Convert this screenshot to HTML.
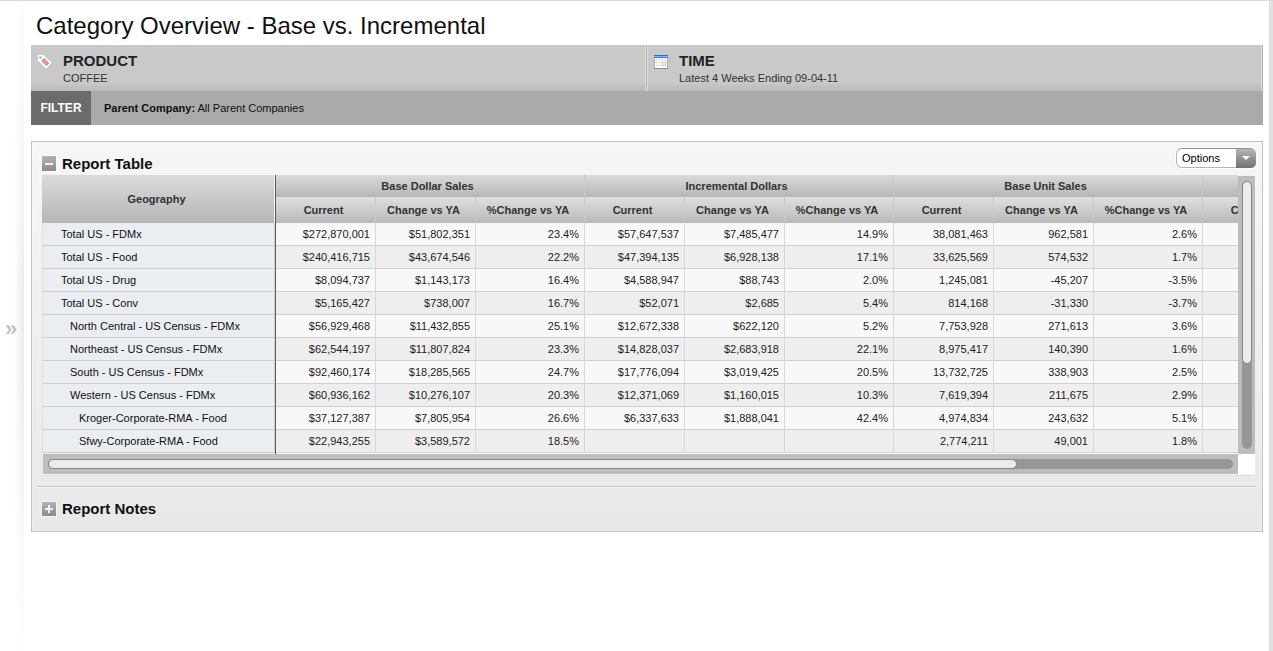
<!DOCTYPE html>
<html>
<head>
<meta charset="utf-8">
<title>Category Overview - Base vs. Incremental</title>
<style>
html,body{margin:0;padding:0;}
body{width:1273px;height:651px;overflow:hidden;background:#fff;font-family:"Liberation Sans",sans-serif;position:relative;color:#222;}
.abs{position:absolute;}
#topstrip{left:0;top:0;width:1273px;height:1px;background:#d9dde2;}
#rightstrip{left:1269px;top:1px;width:4px;height:650px;background:#dde0e5;}
#leftgrad{left:14px;top:1px;width:10px;height:650px;background:linear-gradient(to right,#ffffff,#ebebeb);}
#leftfade{left:14px;top:1px;width:10px;height:650px;background:linear-gradient(to bottom,rgba(255,255,255,.85) 0,rgba(255,255,255,.45) 25%,rgba(255,255,255,0) 45%,rgba(255,255,255,0) 58%,rgba(255,255,255,.6) 82%,rgba(255,255,255,.95) 100%);}
#chev{left:5px;top:318px;font-size:22px;line-height:22px;color:#c2c2c2;font-weight:bold;}
#title{left:36px;top:11px;font-size:24px;line-height:30px;color:#111;white-space:nowrap;}
#prodbar{left:31px;top:45px;width:1232px;height:46px;background:linear-gradient(to bottom,#c9c9c9 0,#c9c9c9 38px,#b9b9b9 46px);}
#div1{left:645px;top:46px;width:3px;height:45px;background:linear-gradient(to right,#dcdcdc 0,#dcdcdc 1px,#b2b2b2 1px,#b2b2b2 2px,#dcdcdc 2px);}
#div3{left:1261px;top:46px;width:2px;height:45px;background:linear-gradient(to right,#dedede 0,#dedede 1px,#b0b0b0 1px);}
.h1{font-size:15px;font-weight:bold;color:#222;line-height:16px;white-space:nowrap;}
.h2{font-size:11px;color:#333;line-height:13px;white-space:nowrap;}
#filterbar{left:31px;top:91px;width:1232px;height:34px;background:#aaaaaa;}
#filterbtn{left:31px;top:91px;width:60px;height:34px;background:#6b6b6b;color:#fff;font-weight:bold;font-size:12px;line-height:34px;text-align:center;}
#filtertxt{left:104px;top:91px;line-height:34px;font-size:11px;color:#111;white-space:nowrap;}
#panel{left:31px;top:141px;width:1230px;height:389px;border:1px solid #c0c1c6;box-shadow:inset 0 0 0 1px rgba(255,255,255,0.25);background:linear-gradient(to bottom,#f6f6f6,#e8e8e8);}
.tog{width:14px;height:14px;background:linear-gradient(to bottom,#b2b2b2,#8c8c8c);box-shadow:0 0 0 1px rgba(255,255,255,0.5);}
.ptitle{font-size:15px;font-weight:bold;color:#111;line-height:18px;white-space:nowrap;}
#opt{left:1176px;top:148px;width:78px;height:18px;border:1px solid #b4b4b4;border-top-color:#8c8c8c;border-radius:6px;background:#fff;font-size:11px;line-height:18px;color:#000;box-shadow:0 0 0 1px rgba(255,255,255,0.55);}
#opt span{position:absolute;left:5px;top:0;}
#opt i{position:absolute;left:59px;top:0;width:20px;height:19px;border-radius:0 5px 5px 0;background:linear-gradient(to bottom,#b6b6b6,#707070);}
#opt b{position:absolute;left:65px;top:7px;width:0;height:0;border-left:4px solid transparent;border-right:4px solid transparent;border-top:4px solid #fff;}
#sep{left:37px;top:486px;width:1219px;height:1px;background:#c4c4c4;}
#sep2{left:37px;top:487px;width:1219px;height:1px;background:#f6f6f6;}
/* table */
#tbl{left:42px;top:175px;width:1196px;height:279px;overflow:hidden;background:#f8f8f8;}
.hd{position:absolute;font-size:11px;font-weight:bold;color:#333;text-align:center;white-space:nowrap;overflow:hidden;}
.g1{background:linear-gradient(to bottom,#dadada,#b6b6b6);}
.g2{background:linear-gradient(to bottom,#e0e0e0,#b9b9b9);}
.row{position:absolute;left:0;width:1196px;height:22px;border-bottom:1px solid #cfcfcf;font-size:11px;line-height:22px;white-space:nowrap;}
.row.o{background:#f8f8f8;}
.row.e{background:#eeeeee;}
.row div{position:absolute;top:0;height:22px;box-sizing:border-box;}
.geo{left:0;width:233px;background:#eaedf2;border-left:1px solid #dde0e5;border-right:1px solid #d2d5da;color:#111;}
.c{text-align:right;padding-right:5px;border-right:1px solid #d8d8d8;color:#222;}
#vdiv{left:275px;top:175px;width:1px;height:279px;background:#5b5753;z-index:3;}
#vtrack{left:1238px;top:176px;width:17px;height:278px;background:#bdbdbd;}
#vinner{left:1242px;top:181px;width:10px;height:268px;background:#979797;border-radius:5px;}
#vthumb{left:1242px;top:181px;width:8px;height:181px;background:#ececec;border:1px solid #858585;border-radius:5px;}
#htrack{left:43px;top:454px;width:1195px;height:20px;background:#bdbdbd;}
#hinner{left:48px;top:459px;width:1185px;height:10px;background:#979797;border-radius:5px;}
#hthumb{left:48px;top:459px;width:967px;height:8px;background:#ececec;border:1px solid #858585;border-radius:5px;}
#wrow{left:43px;top:453px;width:1195px;height:1px;background:linear-gradient(to right,#e9ecf1 0,#e9ecf1 232px,#fff 232px);}
#lrow{left:42px;top:474px;width:1214px;height:2px;background:linear-gradient(to bottom,#f3f3f3 0,#f3f3f3 1px,#dfdfdf 1px);}
#corner{left:1238px;top:454px;width:17px;height:20px;background:#fff;}
</style>
</head>
<body>
<div class="abs" id="topstrip"></div>
<div class="abs" id="rightstrip"></div>
<div class="abs" id="leftgrad"></div><div class="abs" id="leftfade"></div>
<div class="abs" id="chev">&raquo;</div>
<div class="abs" id="title">Category Overview - Base vs. Incremental</div>

<div class="abs" id="prodbar"></div>
<div class="abs" id="div1"></div>
<div class="abs" id="div3"></div>
<svg class="abs" style="left:36px;top:53px" width="18" height="18" viewBox="0 0 18 18">
  <path d="M1.9 2.6 L7.8 2.6 L16.3 10.4 L10 16.8 L1.9 8.6 Z" fill="#8e8e8e" opacity="0.6"/>
  <path d="M1.9 1.9 L7.6 1.9 L15.9 10 L10 15.9 L1.9 7.9 Z" fill="#fff"/>
  <path d="M8 5 L13.3 10.2 L10.4 13.1 L5.2 7.8 Z" fill="#f47c84"/>
  <path d="M8.1 6.9 L11.4 10.2 L10.3 11.3 L7 8 Z" fill="#f9a3a8"/>
  <circle cx="4.4" cy="4.5" r="1.35" fill="#b0b0b0"/>
</svg>
<div class="abs h1" style="left:63px;top:53px">PRODUCT</div>
<div class="abs h2" style="left:63px;top:72px">COFFEE</div>

<svg class="abs" style="left:654px;top:55px" width="14" height="14" viewBox="0 0 14 14" shape-rendering="crispEdges">
  <rect x="0" y="0" width="14" height="14" fill="#fff"/>
  <rect x="0" y="3" width="1" height="11" fill="#acacac"/><rect x="13" y="3" width="1" height="11" fill="#acacac"/>
  <rect x="0" y="13" width="14" height="1" fill="#8c8c8c"/>
  <rect x="0" y="0" width="14" height="1" fill="#2f6fc0"/>
  <rect x="0" y="1" width="14" height="1" fill="#7cbcf6"/>
  <rect x="0" y="2" width="14" height="1" fill="#2e7ed8"/>
  <rect x="2" y="4" width="10" height="7" fill="#e3e3e3"/>
  <rect x="8" y="7" width="4" height="4" fill="#c4c4c4"/>
  <g fill="#fff"><rect x="3" y="5" width="2" height="2"/><rect x="6" y="5" width="2" height="2"/><rect x="9" y="5" width="2" height="2"/><rect x="3" y="8" width="2" height="2"/><rect x="6" y="8" width="2" height="2"/><rect x="9" y="8" width="2" height="2"/></g>
</svg>
<div class="abs h1" style="left:679px;top:53px">TIME</div>
<div class="abs h2" style="left:679px;top:72px">Latest 4 Weeks Ending 09-04-11</div>

<div class="abs" id="filterbar"></div>
<div class="abs" id="filterbtn">FILTER</div>
<div class="abs" id="filtertxt"><b>Parent Company:</b> All Parent Companies</div>

<div class="abs" id="panel"></div>
<div class="abs tog" style="left:42px;top:156px;height:15px"><div class="abs" style="left:3px;top:7px;width:8px;height:2px;background:#f2f2f2"></div></div>
<div class="abs ptitle" style="left:62px;top:155px">Report Table</div>
<div class="abs" id="opt"><span>Options</span><i></i><b></b></div>

<div class="abs" id="tbl">
<!--TABLE-->
<div class="hd g1" style="left:0;top:0;width:229px;height:48px;line-height:49px;padding-right:3px">Geography</div>
<div class="hd g1" style="left:234px;top:0;width:303px;padding-right:5px;height:22px;line-height:22px;border-right:1px solid #c9c9c9">Base Dollar Sales</div>
<div class="hd g1" style="left:543px;top:0;width:303px;padding-right:5px;height:22px;line-height:22px;border-right:1px solid #c9c9c9">Incremental Dollars</div>
<div class="hd g1" style="left:852px;top:0;width:303px;padding-right:5px;height:22px;line-height:22px;border-right:1px solid #c9c9c9">Base Unit Sales</div>
<div class="hd g1" style="left:1161px;top:0;width:94px;padding-right:5px;height:22px;line-height:22px;border-right:1px solid #c9c9c9"></div>
<div class="hd g2" style="left:234px;top:22px;width:95px;padding-right:4px;height:26px;line-height:27px;border-right:1px solid #c9c9c9">Current</div>
<div class="hd g2" style="left:334px;top:22px;width:95px;padding-right:4px;height:26px;line-height:27px;border-right:1px solid #c9c9c9">Change vs YA</div>
<div class="hd g2" style="left:434px;top:22px;width:104px;padding-right:4px;height:26px;line-height:27px;border-right:1px solid #c9c9c9">%Change vs YA</div>
<div class="hd g2" style="left:543px;top:22px;width:95px;padding-right:4px;height:26px;line-height:27px;border-right:1px solid #c9c9c9">Current</div>
<div class="hd g2" style="left:643px;top:22px;width:95px;padding-right:4px;height:26px;line-height:27px;border-right:1px solid #c9c9c9">Change vs YA</div>
<div class="hd g2" style="left:743px;top:22px;width:104px;padding-right:4px;height:26px;line-height:27px;border-right:1px solid #c9c9c9">%Change vs YA</div>
<div class="hd g2" style="left:852px;top:22px;width:95px;padding-right:4px;height:26px;line-height:27px;border-right:1px solid #c9c9c9">Current</div>
<div class="hd g2" style="left:952px;top:22px;width:95px;padding-right:4px;height:26px;line-height:27px;border-right:1px solid #c9c9c9">Change vs YA</div>
<div class="hd g2" style="left:1052px;top:22px;width:104px;padding-right:4px;height:26px;line-height:27px;border-right:1px solid #c9c9c9">%Change vs YA</div>
<div class="hd g2" style="left:1161px;top:22px;width:95px;padding-right:4px;height:26px;line-height:27px;border-right:1px solid #c9c9c9">Current</div>
<div class="row o" style="top:48px"><div class="geo" style="padding-left:18px">Total US - FDMx</div><div class="c" style="left:234px;width:100px">$272,870,001</div><div class="c" style="left:334px;width:100px">$51,802,351</div><div class="c" style="left:434px;width:109px">23.4%</div><div class="c" style="left:543px;width:100px">$57,647,537</div><div class="c" style="left:643px;width:100px">$7,485,477</div><div class="c" style="left:743px;width:109px">14.9%</div><div class="c" style="left:852px;width:100px">38,081,463</div><div class="c" style="left:952px;width:100px">962,581</div><div class="c" style="left:1052px;width:109px">2.6%</div><div class="c" style="left:1161px;width:100px"></div></div>
<div class="row e" style="top:71px"><div class="geo" style="padding-left:18px">Total US - Food</div><div class="c" style="left:234px;width:100px">$240,416,715</div><div class="c" style="left:334px;width:100px">$43,674,546</div><div class="c" style="left:434px;width:109px">22.2%</div><div class="c" style="left:543px;width:100px">$47,394,135</div><div class="c" style="left:643px;width:100px">$6,928,138</div><div class="c" style="left:743px;width:109px">17.1%</div><div class="c" style="left:852px;width:100px">33,625,569</div><div class="c" style="left:952px;width:100px">574,532</div><div class="c" style="left:1052px;width:109px">1.7%</div><div class="c" style="left:1161px;width:100px"></div></div>
<div class="row o" style="top:94px"><div class="geo" style="padding-left:18px">Total US - Drug</div><div class="c" style="left:234px;width:100px">$8,094,737</div><div class="c" style="left:334px;width:100px">$1,143,173</div><div class="c" style="left:434px;width:109px">16.4%</div><div class="c" style="left:543px;width:100px">$4,588,947</div><div class="c" style="left:643px;width:100px">$88,743</div><div class="c" style="left:743px;width:109px">2.0%</div><div class="c" style="left:852px;width:100px">1,245,081</div><div class="c" style="left:952px;width:100px">-45,207</div><div class="c" style="left:1052px;width:109px">-3.5%</div><div class="c" style="left:1161px;width:100px"></div></div>
<div class="row e" style="top:117px"><div class="geo" style="padding-left:18px">Total US - Conv</div><div class="c" style="left:234px;width:100px">$5,165,427</div><div class="c" style="left:334px;width:100px">$738,007</div><div class="c" style="left:434px;width:109px">16.7%</div><div class="c" style="left:543px;width:100px">$52,071</div><div class="c" style="left:643px;width:100px">$2,685</div><div class="c" style="left:743px;width:109px">5.4%</div><div class="c" style="left:852px;width:100px">814,168</div><div class="c" style="left:952px;width:100px">-31,330</div><div class="c" style="left:1052px;width:109px">-3.7%</div><div class="c" style="left:1161px;width:100px"></div></div>
<div class="row o" style="top:140px"><div class="geo" style="padding-left:27px">North Central - US Census - FDMx</div><div class="c" style="left:234px;width:100px">$56,929,468</div><div class="c" style="left:334px;width:100px">$11,432,855</div><div class="c" style="left:434px;width:109px">25.1%</div><div class="c" style="left:543px;width:100px">$12,672,338</div><div class="c" style="left:643px;width:100px">$622,120</div><div class="c" style="left:743px;width:109px">5.2%</div><div class="c" style="left:852px;width:100px">7,753,928</div><div class="c" style="left:952px;width:100px">271,613</div><div class="c" style="left:1052px;width:109px">3.6%</div><div class="c" style="left:1161px;width:100px"></div></div>
<div class="row e" style="top:163px"><div class="geo" style="padding-left:27px">Northeast - US Census - FDMx</div><div class="c" style="left:234px;width:100px">$62,544,197</div><div class="c" style="left:334px;width:100px">$11,807,824</div><div class="c" style="left:434px;width:109px">23.3%</div><div class="c" style="left:543px;width:100px">$14,828,037</div><div class="c" style="left:643px;width:100px">$2,683,918</div><div class="c" style="left:743px;width:109px">22.1%</div><div class="c" style="left:852px;width:100px">8,975,417</div><div class="c" style="left:952px;width:100px">140,390</div><div class="c" style="left:1052px;width:109px">1.6%</div><div class="c" style="left:1161px;width:100px"></div></div>
<div class="row o" style="top:186px"><div class="geo" style="padding-left:27px">South - US Census - FDMx</div><div class="c" style="left:234px;width:100px">$92,460,174</div><div class="c" style="left:334px;width:100px">$18,285,565</div><div class="c" style="left:434px;width:109px">24.7%</div><div class="c" style="left:543px;width:100px">$17,776,094</div><div class="c" style="left:643px;width:100px">$3,019,425</div><div class="c" style="left:743px;width:109px">20.5%</div><div class="c" style="left:852px;width:100px">13,732,725</div><div class="c" style="left:952px;width:100px">338,903</div><div class="c" style="left:1052px;width:109px">2.5%</div><div class="c" style="left:1161px;width:100px"></div></div>
<div class="row e" style="top:209px"><div class="geo" style="padding-left:27px">Western - US Census - FDMx</div><div class="c" style="left:234px;width:100px">$60,936,162</div><div class="c" style="left:334px;width:100px">$10,276,107</div><div class="c" style="left:434px;width:109px">20.3%</div><div class="c" style="left:543px;width:100px">$12,371,069</div><div class="c" style="left:643px;width:100px">$1,160,015</div><div class="c" style="left:743px;width:109px">10.3%</div><div class="c" style="left:852px;width:100px">7,619,394</div><div class="c" style="left:952px;width:100px">211,675</div><div class="c" style="left:1052px;width:109px">2.9%</div><div class="c" style="left:1161px;width:100px"></div></div>
<div class="row o" style="top:232px"><div class="geo" style="padding-left:36px">Kroger-Corporate-RMA - Food</div><div class="c" style="left:234px;width:100px">$37,127,387</div><div class="c" style="left:334px;width:100px">$7,805,954</div><div class="c" style="left:434px;width:109px">26.6%</div><div class="c" style="left:543px;width:100px">$6,337,633</div><div class="c" style="left:643px;width:100px">$1,888,041</div><div class="c" style="left:743px;width:109px">42.4%</div><div class="c" style="left:852px;width:100px">4,974,834</div><div class="c" style="left:952px;width:100px">243,632</div><div class="c" style="left:1052px;width:109px">5.1%</div><div class="c" style="left:1161px;width:100px"></div></div>
<div class="row e" style="top:255px"><div class="geo" style="padding-left:36px">Sfwy-Corporate-RMA - Food</div><div class="c" style="left:234px;width:100px">$22,943,255</div><div class="c" style="left:334px;width:100px">$3,589,572</div><div class="c" style="left:434px;width:109px">18.5%</div><div class="c" style="left:543px;width:100px"></div><div class="c" style="left:643px;width:100px"></div><div class="c" style="left:743px;width:109px"></div><div class="c" style="left:852px;width:100px">2,774,211</div><div class="c" style="left:952px;width:100px">49,001</div><div class="c" style="left:1052px;width:109px">1.8%</div><div class="c" style="left:1161px;width:100px"></div></div>
<!--/TABLE-->
</div>
<div class="abs" id="vdiv"></div>
<div class="abs" id="vtrack"></div><div class="abs" id="vinner"></div><div class="abs" id="vthumb"></div>
<div class="abs" id="htrack"></div><div class="abs" id="hinner"></div><div class="abs" id="hthumb"></div>
<div class="abs" id="wrow"></div><div class="abs" id="lrow"></div>
<div class="abs" id="corner"></div>

<div class="abs" id="sep"></div><div class="abs" id="sep2"></div>
<div class="abs tog" style="left:42px;top:502px"><div class="abs" style="left:3px;top:6px;width:8px;height:2px;background:#f2f2f2"></div><div class="abs" style="left:6px;top:3px;width:2px;height:8px;background:#f2f2f2"></div></div>
<div class="abs ptitle" style="left:62px;top:500px">Report Notes</div>
</body>
</html>
